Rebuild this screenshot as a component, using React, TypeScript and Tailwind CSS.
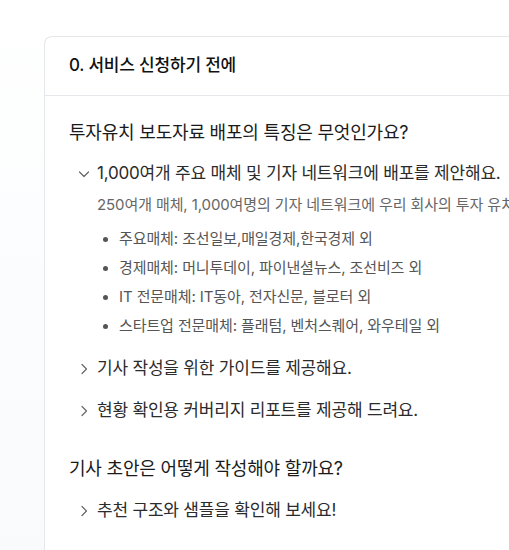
const font = { fontFamily: 'Inter, "Noto Sans CJK KR", "Noto Sans", sans-serif' };

const outlets = [
  '주요매체: 조선일보,매일경제,한국경제 외',
  '경제매체: 머니투데이, 파이낸셜뉴스, 조선비즈 외',
  'IT 전문매체: IT동아, 전자신문, 블로터 외',
  '스타트업 전문매체: 플래텀, 벤처스퀘어, 와우테일 외',
];

function Chevron({ open }: { open?: boolean }) {
  return (
    <svg width="14" height="14" viewBox="0 0 14 14" fill="none" stroke="#666" strokeWidth="1.2" strokeLinecap="round" strokeLinejoin="round">
      {open ? <path d="M2.5 5 L7 9.5 L11.5 5" /> : <path d="M5 2.5 L9.5 7 L5 11.5" />}
    </svg>
  );
}

function Item({ open, title }: { open?: boolean; title: string }) {
  return (
    <div className="flex items-center gap-[6px] h-[24px]">
      <Chevron open={open} />
      <span className="text-[17px] text-[#2b2b2b] tracking-[-0.2px] whitespace-nowrap">{title}</span>
    </div>
  );
}

export default function App() {
  return (
    <div
      className="min-h-[550px] overflow-hidden bg-gradient-to-b from-white to-[#f8fafc] pl-[44px] pt-[36px]"
      style={font}
    >
      <div className="w-[720px] rounded-tl-[8px] border-l border-t border-[#e5e7eb] bg-white">
        {/* section header */}
        <div className="flex h-[59px] items-center border-b border-[#e5e7eb] px-[24px]">
          <h1 className="text-[17px] font-medium text-[#111] tracking-[-0.2px]">0. 서비스 신청하기 전에</h1>
        </div>

        <div className="px-[24px] pt-[24px] pb-[40px]">
          <h2 className="text-[18px] text-[#1a1a1a] tracking-[-0.2px] leading-[26px]">
            투자유치 보도자료 배포의 특징은 무엇인가요?
          </h2>

          <div className="mt-[16px] pl-[8px]">
            <Item open title="1,000여개 주요 매체 및 기자 네트워크에 배포를 제안해요." />
            <div className="pl-[20px]">
              <p className="mt-[8px] text-[15px] text-[#666] whitespace-nowrap tracking-[-0.1px]">
                250여개 매체, 1,000여명의 기자 네트워크에 우리 회사의 투자 유치 소식을 알려요.
              </p>
              <ul className="mt-[12px] flex flex-col gap-[7px] pl-[6px]">
                {outlets.map((o) => (
                  <li key={o} className="flex items-center gap-[11px] h-[22px] text-[15px] text-[#555] tracking-[-0.1px]">
                    <span className="h-[5px] w-[5px] rounded-full bg-[#555]" />
                    {o}
                  </li>
                ))}
              </ul>
            </div>

            <div className="mt-[19px] flex flex-col gap-[18px]">
              <Item title="기사 작성을 위한 가이드를 제공해요." />
              <Item title="현황 확인용 커버리지 리포트를 제공해 드려요." />
            </div>
          </div>

          <h2 className="mt-[33px] text-[18px] text-[#1a1a1a] tracking-[-0.2px] leading-[26px]">
            기사 초안은 어떻게 작성해야 할까요?
          </h2>
          <div className="mt-[17px] pl-[8px]">
            <Item title="추천 구조와 샘플을 확인해 보세요!" />
          </div>
        </div>
      </div>
    </div>
  );
}
